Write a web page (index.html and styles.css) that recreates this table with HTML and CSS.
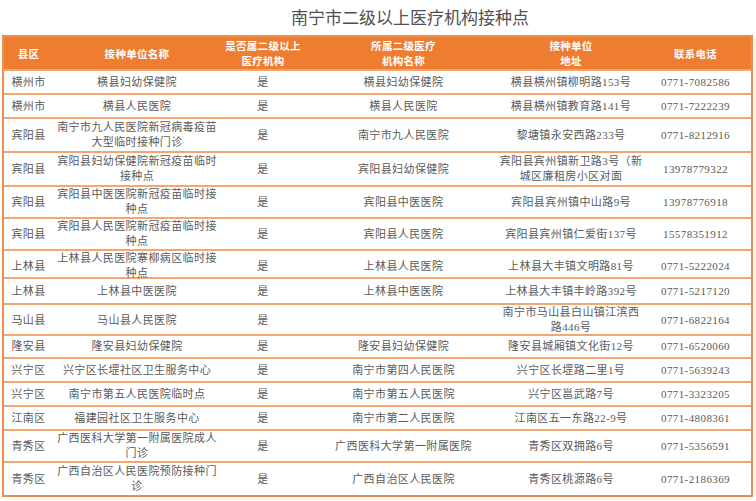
FILE: index.html
```html
<!DOCTYPE html>
<html lang="zh-CN">
<head>
<meta charset="utf-8">
<title>南宁市二级以上医疗机构接种点</title>
<link rel="stylesheet" href="styles.css">
</head>
<body>
<div class="page">
  <h1 class="title">南宁市二级以上医疗机构接种点</h1>
  <div class="table">
    <div class="row head">
      <div class="cell">县区</div>
      <div class="cell">接种单位名称</div>
      <div class="cell">是否属二级以上<br>医疗机构</div>
      <div class="cell">所属二级医疗<br>机构名称</div>
      <div class="cell">接种单位<br>地址</div>
      <div class="cell">联系电话</div>
    </div>
    <div class="row r24">
      <div class="cell">横州市</div>
      <div class="cell">横县妇幼保健院</div>
      <div class="cell">是</div>
      <div class="cell">横县妇幼保健院</div>
      <div class="cell">横县横州镇柳明路153号</div>
      <div class="cell">0771-7082586</div>
    </div>
    <div class="row r24">
      <div class="cell">横州市</div>
      <div class="cell">横县人民医院</div>
      <div class="cell">是</div>
      <div class="cell">横县人民医院</div>
      <div class="cell">横县横州镇教育路141号</div>
      <div class="cell">0771-7222239</div>
    </div>
    <div class="row r34">
      <div class="cell">宾阳县</div>
      <div class="cell">南宁市九人民医院新冠病毒疫苗<br>大型临时接种门诊</div>
      <div class="cell">是</div>
      <div class="cell">南宁市九人民医院</div>
      <div class="cell">黎塘镇永安西路233号</div>
      <div class="cell">0771-8212916</div>
    </div>
    <div class="row r34">
      <div class="cell">宾阳县</div>
      <div class="cell">宾阳县妇幼保健院新冠疫苗临时<br>接种点</div>
      <div class="cell">是</div>
      <div class="cell">宾阳县妇幼保健院</div>
      <div class="cell">宾阳县宾州镇新卫路3号（新<br>城区廉租房小区对面</div>
      <div class="cell">13978779322</div>
    </div>
    <div class="row r32">
      <div class="cell">宾阳县</div>
      <div class="cell">宾阳县中医医院新冠疫苗临时接<br>种点</div>
      <div class="cell">是</div>
      <div class="cell">宾阳县中医医院</div>
      <div class="cell">宾阳县宾州镇中山路9号</div>
      <div class="cell">13978776918</div>
    </div>
    <div class="row r32">
      <div class="cell">宾阳县</div>
      <div class="cell">宾阳县人民医院新冠疫苗临时接<br>种点</div>
      <div class="cell">是</div>
      <div class="cell">宾阳县人民医院</div>
      <div class="cell">宾阳县宾州镇仁爱街137号</div>
      <div class="cell">15578351912</div>
    </div>
    <div class="row r28">
      <div class="cell">上林县</div>
      <div class="cell">上林县人民医院寨柳病区临时接<br>种点</div>
      <div class="cell">是</div>
      <div class="cell">上林县人民医院</div>
      <div class="cell">上林县大丰镇文明路81号</div>
      <div class="cell">0771-5222024</div>
    </div>
    <div class="row r26">
      <div class="cell">上林县</div>
      <div class="cell">上林县中医医院</div>
      <div class="cell">是</div>
      <div class="cell">上林县中医医院</div>
      <div class="cell">上林县大丰镇丰岭路392号</div>
      <div class="cell">0771-5217120</div>
    </div>
    <div class="row r31">
      <div class="cell">马山县</div>
      <div class="cell">马山县人民医院</div>
      <div class="cell">是</div>
      <div class="cell"></div>
      <div class="cell">南宁市马山县白山镇江滨西<br>路446号</div>
      <div class="cell">0771-6822164</div>
    </div>
    <div class="row r23">
      <div class="cell">隆安县</div>
      <div class="cell">隆安县妇幼保健院</div>
      <div class="cell">是</div>
      <div class="cell">隆安县妇幼保健院</div>
      <div class="cell">隆安县城厢镇文化街12号</div>
      <div class="cell">0771-6520060</div>
    </div>
    <div class="row r24">
      <div class="cell">兴宁区</div>
      <div class="cell">兴宁区长堽社区卫生服务中心</div>
      <div class="cell">是</div>
      <div class="cell">南宁市第四人民医院</div>
      <div class="cell">兴宁区长堽路二里1号</div>
      <div class="cell">0771-5639243</div>
    </div>
    <div class="row r24">
      <div class="cell">兴宁区</div>
      <div class="cell">南宁市第五人民医院临时点</div>
      <div class="cell">是</div>
      <div class="cell">南宁市第五人民医院</div>
      <div class="cell">兴宁区邕武路7号</div>
      <div class="cell">0771-3323205</div>
    </div>
    <div class="row r24">
      <div class="cell">江南区</div>
      <div class="cell">福建园社区卫生服务中心</div>
      <div class="cell">是</div>
      <div class="cell">南宁市第二人民医院</div>
      <div class="cell">江南区五一东路22-9号</div>
      <div class="cell">0771-4808361</div>
    </div>
    <div class="row r32">
      <div class="cell">青秀区</div>
      <div class="cell">广西医科大学第一附属医院成人<br>门诊</div>
      <div class="cell">是</div>
      <div class="cell">广西医科大学第一附属医院</div>
      <div class="cell">青秀区双拥路6号</div>
      <div class="cell">0771-5356591</div>
    </div>
    <div class="row r34">
      <div class="cell">青秀区</div>
      <div class="cell">广西自治区人民医院预防接种门<br>诊</div>
      <div class="cell">是</div>
      <div class="cell">广西自治区人民医院</div>
      <div class="cell">青秀区桃源路6号</div>
      <div class="cell">0771-2186369</div>
    </div>
  </div>
</div>
</body>
</html>
```

FILE: styles.css
```css
* {
  box-sizing: border-box;
}

html, body {
  margin: 0;
  padding: 0;
  background: #ffffff;
}

.page {
  width: 756px;
  height: 501px;
  overflow: hidden;
  font-family: "Liberation Serif", "Noto Sans CJK SC", serif;
  color: #5a5a5a;
}

.title {
  margin: 0;
  height: 35px;
  padding: 6px 0 0 64px;
  text-align: center;
  font-family: "Noto Sans CJK SC", sans-serif;
  font-weight: normal;
  font-size: 17px;
  line-height: 22px;
  color: #505050;
}

.table {
  margin-left: 2px;
  width: 751px;
  border: 2px solid #ee8d4d;
}

.row {
  display: grid;
  grid-template-columns: 49px 168px 84px 197px 138px 111px;
  border-top: 2px solid #f3a66f;
}

.row.head {
  border-top: 0;
  height: 32px;
  background: #ee7d31;
  color: #ffffff;
  font-family: "Noto Sans CJK SC", sans-serif;
  font-weight: bold;
}

.cell {
  display: flex;
  align-items: center;
  justify-content: center;
  text-align: center;
  white-space: nowrap;
  font-size: 11px;
  line-height: 15px;
  letter-spacing: 0.4px;
}

.head .cell {
  font-size: 10.5px;
  line-height: 15px;
  letter-spacing: 0.3px;
}

.r23 { height: 23px; }
.r24 { height: 24px; }
.r26 { height: 26px; }
.r28 { height: 28px; }
.r31 { height: 31px; }
.r32 { height: 32px; }
.r34 { height: 34px; }
```
